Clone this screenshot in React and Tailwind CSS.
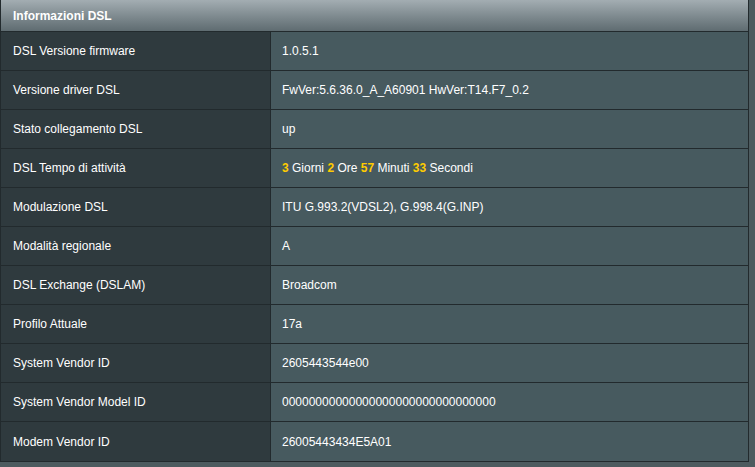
export default function App() {
  const rows = [
    ["DSL Versione firmware", "1.0.5.1"],
    ["Versione driver DSL", "FwVer:5.6.36.0_A_A60901 HwVer:T14.F7_0.2"],
    ["Stato collegamento DSL", "up"],
    ["DSL Tempo di attività", "uptime"],
    ["Modulazione DSL", "ITU G.993.2(VDSL2), G.998.4(G.INP)"],
    ["Modalità regionale", "A"],
    ["DSL Exchange (DSLAM)", "Broadcom"],
    ["Profilo Attuale", "17a"],
    ["System Vendor ID", "2605443544e00"],
    ["System Vendor Model ID", "00000000000000000000000000000000"],
    ["Modem Vendor ID", "26005443434E5A01"],
  ];
  const Y = ({ c }) => <span className="text-[#ffcc00] font-bold">{c}</span>;
  return (
    <div className="w-[755px] h-[467px] bg-[#4d5b5f] text-white text-[12px]" style={{ fontFamily: '"Liberation Sans", Arial, sans-serif' }}>
      <div className="w-[749px] border-l border-r border-b border-[#222a2d]">
        <div className="h-[32px] flex items-center px-[12px] font-bold bg-gradient-to-b from-[#a3adb2] to-[#5f6c71] border-b border-[#222a2d]">Informazioni DSL</div>
        {rows.map(([k, v], i) => (
          <div key={i} className={`flex h-[39px] ${i < rows.length - 1 ? "border-b border-[#222a2d]" : ""}`}>
            <div className="w-[270px] bg-[#2f3a3e] border-r border-[#222a2d] flex items-center px-[12px]">{k}</div>
            <div className="flex-1 bg-[#475a5f] flex items-center px-[11px]">
              {v === "uptime" ? (<span><Y c="3" /> Giorni <Y c="2" /> Ore <Y c="57" /> Minuti <Y c="33" /> Secondi</span>) : v}
            </div>
          </div>
        ))}
      </div>
    </div>
  );
}
